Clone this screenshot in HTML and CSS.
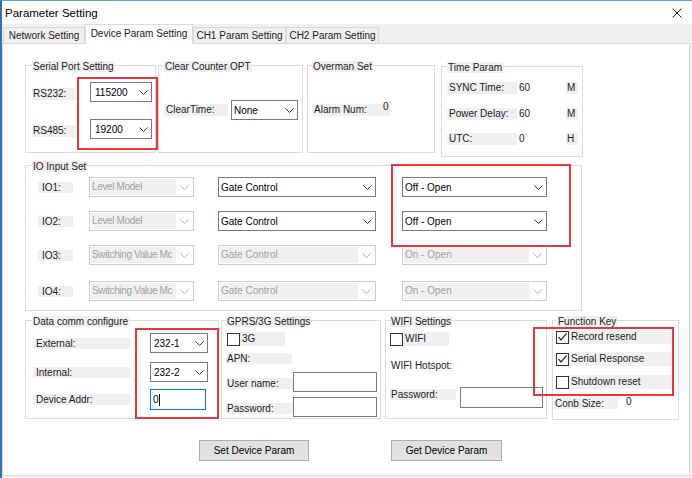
FILE: index.html
```html
<!DOCTYPE html>
<html>
<head>
<meta charset="utf-8">
<link rel="stylesheet" href="styles.css">
</head>
<body>
<div class="window">
  <div class="titlebar">
    <span class="title">Parameter Setting</span>
    <svg class="close" width="10" height="10" viewBox="0 0 10 10"><path d="M0.5 0.5 L9.5 9.5 M9.5 0.5 L0.5 9.5" /></svg>
  </div>
  <div class="tabs">
    <div class="tab t-net">Network Setting</div>
    <div class="tab active t-dev">Device Param Setting</div>
    <div class="tab t-ch1">CH1 Param Setting</div>
    <div class="tab t-ch2">CH2 Param Setting</div>
  </div>
  <div class="panel">
    <div class="row row1">
      <div class="group g-serial">
        <div class="gtitle">Serial Port Setting</div>
        <div class="srow first">
          <div class="lbl">RS232:</div>
          <div class="combo c-serial"><span class="ctext">115200</span><svg class="chev" viewBox="0 0 9 5"><polyline points="0.5,0.5 4.5,4.5 8.5,0.5"/></svg></div>
        </div>
        <div class="srow second">
          <div class="lbl">RS485:</div>
          <div class="combo c-serial"><span class="ctext">19200</span><svg class="chev" viewBox="0 0 9 5"><polyline points="0.5,0.5 4.5,4.5 8.5,0.5"/></svg></div>
        </div>
      </div>
      <div class="group g-clear">
        <div class="gtitle">Clear Counter OPT</div>
        <div class="crow">
          <div class="lbl">ClearTime:</div>
          <div class="combo c-none"><span class="ctext">None</span><svg class="chev" viewBox="0 0 9 5"><polyline points="0.5,0.5 4.5,4.5 8.5,0.5"/></svg></div>
        </div>
      </div>
      <div class="group g-over">
        <div class="gtitle">Overman Set</div>
        <div class="orow">
          <div class="lbl">Alarm Num:</div>
          <div class="val">0</div>
        </div>
      </div>
      <div class="group g-time">
        <div class="gtitle">Time Param</div>
        <div class="tgrid">
          <div class="lbl">SYNC Time:</div><div class="tval">60</div><div class="unit">M</div>
          <div class="lbl">Power Delay:</div><div class="tval">60</div><div class="unit">M</div>
          <div class="lbl">UTC:</div><div class="tval">0</div><div class="unit">H</div>
        </div>
      </div>
    </div>

    <div class="group g-io">
      <div class="gtitle">IO Input Set</div>
      <div class="iorow io-first">
        <div class="lbl">IO1:</div>
        <div class="combo dis c-mode"><span class="ctext">Level Model</span><svg class="chev" viewBox="0 0 9 5"><polyline points="0.5,0.5 4.5,4.5 8.5,0.5"/></svg></div>
        <div class="combo c-gate"><span class="ctext">Gate Control</span><svg class="chev" viewBox="0 0 9 5"><polyline points="0.5,0.5 4.5,4.5 8.5,0.5"/></svg></div>
        <div class="combo c-off"><span class="ctext">Off - Open</span><svg class="chev" viewBox="0 0 9 5"><polyline points="0.5,0.5 4.5,4.5 8.5,0.5"/></svg></div>
      </div>
      <div class="iorow">
        <div class="lbl">IO2:</div>
        <div class="combo dis c-mode"><span class="ctext">Level Model</span><svg class="chev" viewBox="0 0 9 5"><polyline points="0.5,0.5 4.5,4.5 8.5,0.5"/></svg></div>
        <div class="combo c-gate"><span class="ctext">Gate Control</span><svg class="chev" viewBox="0 0 9 5"><polyline points="0.5,0.5 4.5,4.5 8.5,0.5"/></svg></div>
        <div class="combo c-off"><span class="ctext">Off - Open</span><svg class="chev" viewBox="0 0 9 5"><polyline points="0.5,0.5 4.5,4.5 8.5,0.5"/></svg></div>
      </div>
      <div class="iorow">
        <div class="lbl">IO3:</div>
        <div class="combo dis c-mode"><span class="ctext">Switching Value Mc</span><svg class="chev" viewBox="0 0 9 5"><polyline points="0.5,0.5 4.5,4.5 8.5,0.5"/></svg></div>
        <div class="combo dis c-gate"><span class="ctext">Gate Control</span><svg class="chev" viewBox="0 0 9 5"><polyline points="0.5,0.5 4.5,4.5 8.5,0.5"/></svg></div>
        <div class="combo dis c-off"><span class="ctext">On - Open</span><svg class="chev" viewBox="0 0 9 5"><polyline points="0.5,0.5 4.5,4.5 8.5,0.5"/></svg></div>
      </div>
      <div class="iorow io-last">
        <div class="lbl">IO4:</div>
        <div class="combo dis c-mode"><span class="ctext">Switching Value Mc</span><svg class="chev" viewBox="0 0 9 5"><polyline points="0.5,0.5 4.5,4.5 8.5,0.5"/></svg></div>
        <div class="combo dis c-gate"><span class="ctext">Gate Control</span><svg class="chev" viewBox="0 0 9 5"><polyline points="0.5,0.5 4.5,4.5 8.5,0.5"/></svg></div>
        <div class="combo dis c-off"><span class="ctext">On - Open</span><svg class="chev" viewBox="0 0 9 5"><polyline points="0.5,0.5 4.5,4.5 8.5,0.5"/></svg></div>
      </div>
    </div>

    <div class="row row3">
      <div class="group g-data">
        <div class="gtitle">Data comm configure</div>
        <div class="drow first">
          <div class="lbl">External:</div>
          <div class="combo c-data"><span class="ctext">232-1</span><svg class="chev" viewBox="0 0 9 5"><polyline points="0.5,0.5 4.5,4.5 8.5,0.5"/></svg></div>
        </div>
        <div class="drow second">
          <div class="lbl">Internal:</div>
          <div class="combo c-data"><span class="ctext">232-2</span><svg class="chev" viewBox="0 0 9 5"><polyline points="0.5,0.5 4.5,4.5 8.5,0.5"/></svg></div>
        </div>
        <div class="drow third">
          <div class="lbl">Device Addr:</div>
          <div class="tbox focus c-addr"><span>0</span><span class="caret"></span></div>
        </div>
      </div>
      <div class="group g-gprs">
        <div class="gtitle">GPRS/3G Settings</div>
        <div class="chkrow">
          <span class="chk"></span><span class="chklbl l-3g">3G</span>
        </div>
        <div class="lbl l-apn">APN:</div>
        <div class="frow r-user">
          <div class="lbl">User name:</div>
          <div class="tbox t-g"></div>
        </div>
        <div class="frow r-pass">
          <div class="lbl">Password:</div>
          <div class="tbox t-g"></div>
        </div>
      </div>
      <div class="group g-wifi">
        <div class="gtitle">WIFI Settings</div>
        <div class="chkrow">
          <span class="chk"></span><span class="chklbl l-wifi">WIFI</span>
        </div>
        <div class="hotspot">WIFI Hotspot:</div>
        <div class="frow r-wpass">
          <div class="lbl">Password:</div>
          <div class="tbox t-w"></div>
        </div>
      </div>
      <div class="group g-func">
        <div class="gtitle">Function Key</div>
        <div class="chkrow f1">
          <span class="chk"><svg viewBox="0 0 11 11"><polyline points="1.5,5 4,8 9.5,1.5"/></svg></span><span class="chklbl l-func">Record resend</span>
        </div>
        <div class="chkrow f2">
          <span class="chk"><svg viewBox="0 0 11 11"><polyline points="1.5,5 4,8 9.5,1.5"/></svg></span><span class="chklbl l-func">Serial Response</span>
        </div>
        <div class="chkrow f3">
          <span class="chk"></span><span class="chklbl l-func">Shutdown reset</span>
        </div>
        <div class="orow conb">
          <div class="lbl">Conb Size:</div>
          <div class="val">0</div>
        </div>
      </div>
    </div>

    <div class="buttons">
      <div class="btn b-set">Set Device Param</div>
      <div class="btn b-get">Get Device Param</div>
    </div>

    <div class="mark m1"></div>
    <div class="mark m2"></div>
    <div class="mark m3"></div>
    <div class="mark m4"></div>
  </div>
</div>
</body>
</html>
```

FILE: styles.css
```css
html, body {
  margin: 0;
  padding: 0;
  background: #ffffff;
}
body {
  font-family: "Liberation Sans", Arial, sans-serif;
  font-size: 10px;
  color: #1a1a1a;
}
.window {
  width: 692px;
  height: 478px;
  box-sizing: border-box;
  border-top: 1px solid #5aa4ea;
  border-left: 2px solid #3c6f9e;
  background: #f0f0f0;
  overflow: hidden;
}
.titlebar {
  height: 23px;
  background: #ffffff;
  display: flex;
  align-items: center;
  justify-content: space-between;
  padding-left: 3px;
}
.title {
  font-size: 11.5px;
  color: #000;
}
.close {
  margin-right: 10px;
  margin-top: 1px;
}
.close path {
  stroke: #222;
  stroke-width: 1;
  fill: none;
}
.tabs {
  height: 19px;
  display: flex;
  align-items: flex-end;
  padding-left: 1px;
  background: #f0f0f0;
}
.tab {
  box-sizing: border-box;
  height: 16px;
  line-height: 15px;
  border: 1px solid #d9d9d9;
  border-bottom: none;
  background: #f0f0f0;
  text-align: center;
  color: #1a1a1a;
  white-space: nowrap;
}
.tab.active {
  height: 20px;
  line-height: 18px;
  background: #ffffff;
  margin-bottom: -1px;
  position: relative;
  z-index: 1;
}
.t-net { width: 82px; }
.t-dev { width: 108px; }
.t-ch1 { width: 93px; }
.t-ch2 { width: 93px; }

.panel {
  position: relative;
  width: 688px;
  height: 433px;
  box-sizing: border-box;
  border: 1px solid #d9d9d9;
  background: #ffffff;
  padding: 21px 0 0 22px;
}

.row {
  display: flex;
  align-items: flex-start;
}
.group {
  box-sizing: border-box;
  border: 1px solid #dcdcdc;
  flex: none;
}
.gtitle {
  width: fit-content;
  height: 11px;
  line-height: 11px;
  margin-top: -5px;
  margin-left: 6px;
  padding: 0 1px;
  background: #f0f0f0;
  white-space: nowrap;
}
.lbl {
  box-sizing: border-box;
  height: 12px;
  line-height: 12px;
  background: #f0f0f0;
  white-space: nowrap;
  flex: none;
}
.val {
  line-height: 10px;
}

/* combo boxes */
.combo {
  box-sizing: border-box;
  height: 20px;
  border: 1px solid #7a7a7a;
  background: #ffffff;
  display: flex;
  align-items: center;
  padding: 0 3px 0 2px;
  flex: none;
}
.ctext {
  flex: 1;
  white-space: nowrap;
  overflow: hidden;
  color: #000;
}
.chev {
  width: 9px;
  height: 5px;
  flex: none;
}
.chev polyline {
  fill: none;
  stroke: #333;
  stroke-width: 1;
}
.combo.dis {
  border-color: #cccccc;
  padding: 1px 0 1px 1px;
  align-items: stretch;
}
.combo.dis .ctext {
  background: #f0f0f0;
  color: #a0a0a0;
  padding-left: 1px;
  line-height: 16px;
}
.combo.dis .chev {
  align-self: center;
  margin: 0 4px 0 4px;
}
.combo.dis .chev polyline {
  stroke: #b5b5b5;
}
.c-mode .ctext {
  letter-spacing: -0.35px;
}

/* text boxes */
.tbox {
  box-sizing: border-box;
  border: 1px solid #7a7a7a;
  background: #ffffff;
  flex: none;
}
.tbox.focus {
  border-color: #0078d7;
  display: flex;
  align-items: center;
  padding-left: 2px;
  color: #000;
}
.caret {
  width: 1px;
  height: 12px;
  background: #000;
  margin-left: 0;
}

/* checkboxes */
.chkrow {
  display: flex;
  align-items: center;
}
.chk {
  box-sizing: border-box;
  width: 13px;
  height: 13px;
  border: 1px solid #333333;
  background: #ffffff;
  flex: none;
  display: flex;
}
.chk svg {
  width: 11px;
  height: 11px;
}
.chk polyline {
  fill: none;
  stroke: #333;
  stroke-width: 1.2;
}
.chklbl {
  box-sizing: border-box;
  height: 14px;
  line-height: 14px;
  background: #f0f0f0;
  padding-left: 2px;
  white-space: nowrap;
}

/* Serial */
.g-serial { width: 131px; height: 88px; }
.srow {
  display: flex;
  align-items: flex-start;
  padding-left: 6px;
}
.srow.first { margin-top: 10px; }
.srow.second { margin-top: 17px; }
.srow .lbl { width: 44px; margin-top: 6px; padding-left: 1px; }
.c-serial { width: 62px; margin-left: 14px; padding-left: 4px; }

/* Clear */
.g-clear { width: 145px; height: 88px; margin-left: 2px; }
.g-clear .gtitle { margin-left: 5px; }
.crow {
  display: flex;
  align-items: flex-start;
  padding-left: 5px;
  margin-top: 28px;
}
.crow .lbl { width: 64px; margin-top: 4px; padding-left: 2px; }
.c-none { width: 67px; margin-left: 3px; padding-left: 2px; }

/* Overman */
.g-over { width: 128px; height: 88px; margin-left: 4px; }
.g-over .gtitle { margin-left: 4px; }
.orow {
  display: flex;
  align-items: flex-start;
  padding-left: 4px;
  margin-top: 32px;
}
.orow .lbl { width: 78px; padding-left: 2px; }
.orow .val { margin-left: -7px; margin-top: -2px; }

/* Time */
.g-time { width: 142px; height: 91px; margin-left: 6px; margin-top: 1px; }
.g-time .gtitle { margin-left: 5px; }
.tgrid {
  display: grid;
  grid-template-columns: 70px 49px 12px;
  grid-template-rows: 12px 12px 12px;
  row-gap: 13.5px;
  padding-left: 5px;
  margin-top: 9px;
}
.tgrid .lbl { padding-left: 2px; }
.tval { line-height: 12px; padding-left: 2px; }
.unit { line-height: 12px; background: #f0f0f0; padding-left: 1px; }

/* IO */
.g-io { width: 557px; height: 146px; margin-top: 8px; }
.iorow {
  display: flex;
  align-items: center;
  padding-left: 12px;
  margin-top: 14px;
}
.iorow.io-first { margin-top: 5px; }
.iorow.io-last { margin-top: 16px; }
.iorow .lbl { width: 35px; height: 11px; line-height: 11px; padding-left: 4px; }
.c-mode { width: 105px; margin-left: 16px; }
.c-gate { width: 158px; margin-left: 24px; }
.c-off { width: 145px; margin-left: 26px; }

/* Row 3 */
.row3 { margin-top: 9px; }
.g-data { width: 194px; height: 99px; }
.drow {
  display: flex;
  align-items: center;
  padding-left: 7px;
}
.drow.first { margin-top: 6px; }
.drow.second { margin-top: 9px; }
.drow.third { margin-top: 7px; }
.drow .lbl { width: 97px; height: 11px; line-height: 11px; padding-left: 3px; }
.c-data { width: 58px; margin-left: 20px; padding-left: 3px; }
.c-addr { width: 56px; height: 21px; margin-left: 20px; }

.g-gprs { width: 160px; height: 99px; margin-left: 2px; }
.g-gprs .gtitle { margin-left: 4px; }
.g-gprs .chkrow { padding-left: 5px; margin-top: 5px; }
.l-3g { width: 45px; }
.l-apn { width: 66px; height: 11px; line-height: 11px; margin-left: 4px; margin-top: 7px; padding-left: 1px; }
.frow {
  display: flex;
  align-items: flex-start;
  padding-left: 4px;
}
.r-user { margin-top: 8px; }
.r-pass { margin-top: 5px; }
.frow .lbl { width: 67px; height: 11px; line-height: 11px; margin-top: 6px; padding-left: 1px; }
.t-g { width: 84px; height: 20px; }

.g-wifi { width: 162px; height: 99px; margin-left: 4px; }
.g-wifi .gtitle { margin-left: 4px; }
.g-wifi .chkrow { padding-left: 4px; margin-top: 5px; }
.l-wifi { width: 46px; }
.hotspot { margin-left: 5px; margin-top: 14px; line-height: 12px; }
.r-wpass { margin-top: 15px; }
.r-wpass .lbl { width: 66px; margin-top: 2px; }
.t-w { width: 83px; height: 21px; margin-left: 4px; }

.g-func { width: 127px; height: 100px; margin-left: 5px; }
.g-func .gtitle { margin-left: 4px; }
.g-func .chkrow { padding-left: 3px; }
.f1 { margin-top: 3px; }
.f2 { margin-top: 8px; }
.f3 { margin-top: 9px; }
.l-func { width: 104px; }
.orow.conb { padding-left: 1px; margin-top: 9px; }
.conb .lbl { width: 64px; height: 11px; line-height: 11px; padding-left: 1px; }
.conb .val { margin-left: 8px; margin-top: -1px; }

/* Buttons */
.buttons {
  display: flex;
  margin-top: 20px;
}
.btn {
  box-sizing: border-box;
  height: 21px;
  line-height: 19px;
  border: 1px solid #adadad;
  background: #e1e1e1;
  text-align: center;
  color: #000;
}
.b-set { width: 110px; margin-left: 174px; }
.b-get { width: 111px; margin-left: 82px; }

/* red annotation boxes */
.mark {
  position: absolute;
  box-sizing: border-box;
  border: 2px solid #e8363c;
}
.m1 { left: 74px; top: 33px; width: 81px; height: 73px; }
.m2 { left: 388px; top: 120px; width: 180px; height: 83px; }
.m3 { left: 132px; top: 284px; width: 84px; height: 91px; }
.m4 { left: 530px; top: 283px; width: 141px; height: 69px; }
```
